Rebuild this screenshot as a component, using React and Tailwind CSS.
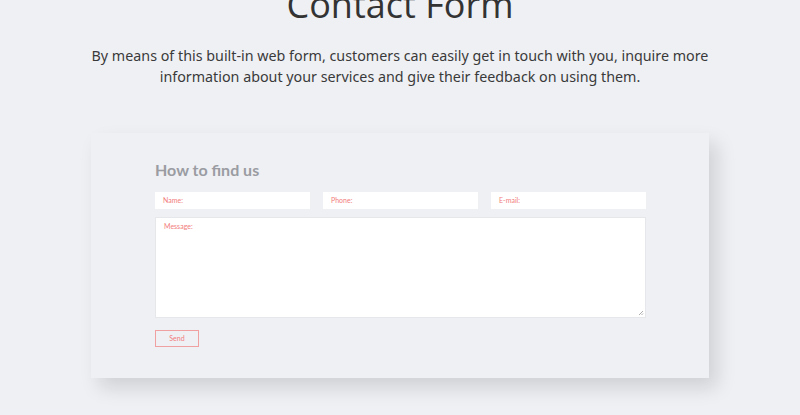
export default function App() {
  return (
    <div className="w-[800px] h-[415px] overflow-hidden bg-[#eff0f4] flex flex-col items-center" style={{ fontFamily: "'Noto Sans', sans-serif" }}>
      <h1 className="mt-[-17px] text-[36px] leading-[44px] text-[#333] font-normal" style={{ fontFamily: "'Open Sans', sans-serif" }}>Contact Form</h1>
      <p className="mt-[18px] w-[640px] text-center text-[14.3px] leading-[21px] text-[#3a3a3a]" style={{ fontFamily: "'Noto Sans', sans-serif" }}>
        By means of this built-in web form, customers can easily get in touch with you, inquire more information about your services and give their feedback on using them.
      </p>
      <div className="mt-[46px] w-[618px] h-[245px] bg-[#eff0f4] shadow-[8px_10px_18px_rgba(0,0,0,0.13)] pl-[64px] pr-[63px] pt-[27px]" style={{ fontFamily: "Lato, sans-serif" }}>
        <h2 className="text-[16px] leading-[20px] font-bold text-[#9a9ca2]">How to find us</h2>
        <div className="mt-[12px] grid grid-cols-3 gap-[13px]">
          <div className="h-[17px] bg-white pl-[8px] flex items-center text-[7px] text-[#f27c7c]">Name:</div>
          <div className="h-[17px] bg-white pl-[8px] flex items-center text-[7px] text-[#f27c7c]">Phone:</div>
          <div className="h-[17px] bg-white pl-[8px] flex items-center text-[7px] text-[#f27c7c]">E-mail:</div>
        </div>
        <div className="relative mt-[8px] h-[101px] bg-white pl-[8px] pt-[4px] text-[7px] leading-[9px] text-[#f27c7c] border border-[#e6e7ea]">
          Message:
          <svg className="absolute right-[1px] bottom-[1px]" width="6" height="6" viewBox="0 0 6 6">
            <path d="M5 1L1 5M5 3.5L3.5 5" stroke="#999" strokeWidth="0.8" />
          </svg>
        </div>
        <button className="mt-[12px] w-[44px] h-[17px] border border-[#f0a0a0] text-[7px] text-[#f27c7c] flex items-center justify-center bg-transparent">Send</button>
      </div>
    </div>
  );
}
